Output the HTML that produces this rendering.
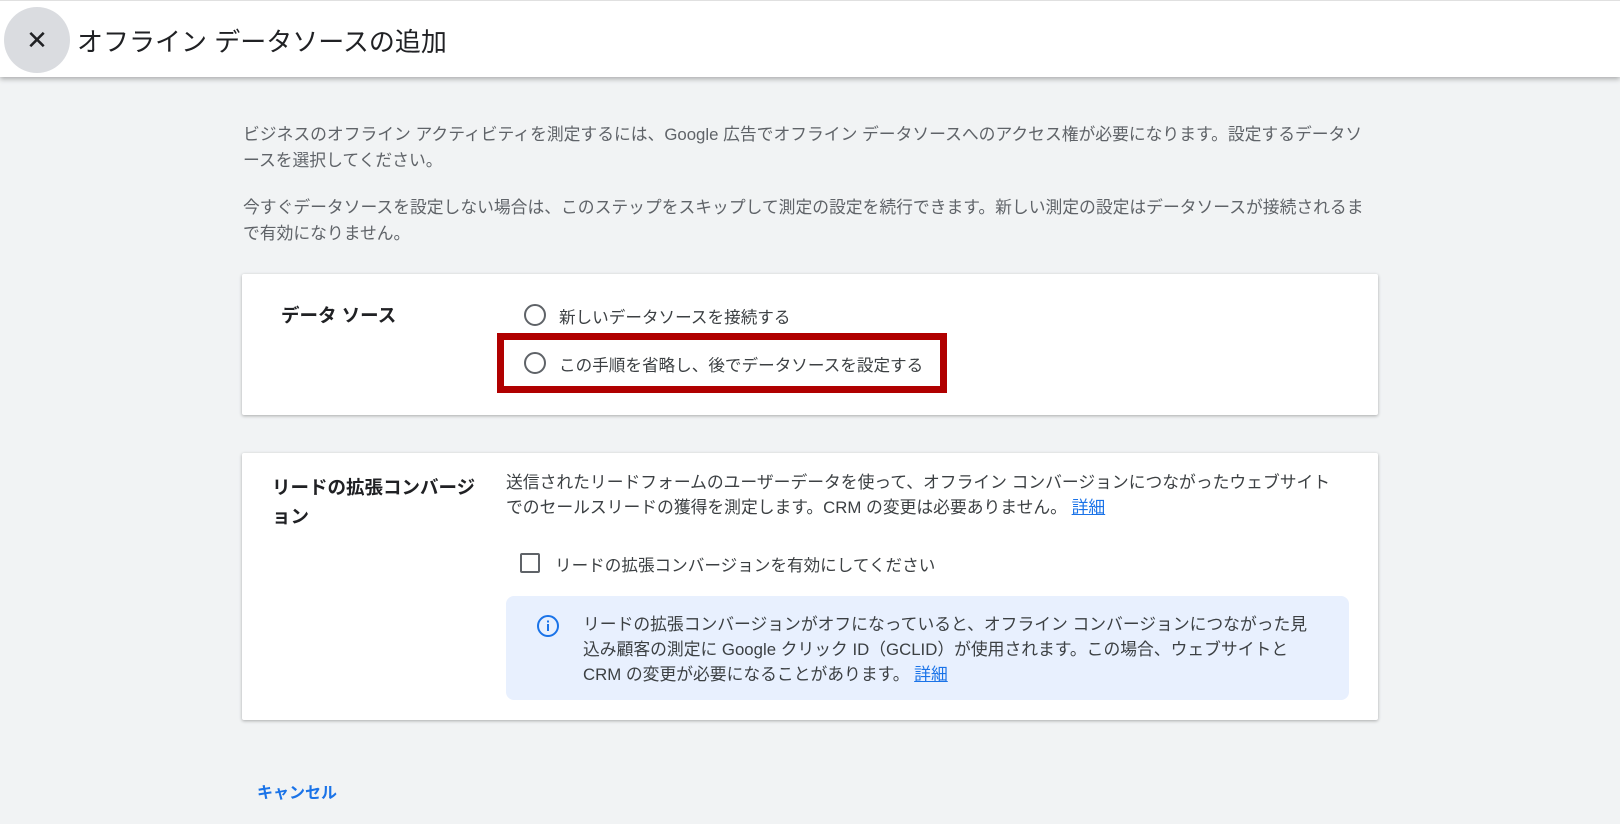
<!DOCTYPE html>
<html><head><meta charset="utf-8"><style>
*{margin:0;padding:0;box-sizing:border-box}
body{width:1620px;height:824px;background:#f1f3f4;font-family:"Liberation Sans","Noto Sans CJK JP",sans-serif;color:#3c4043;position:relative;overflow:hidden}
.hdr{position:absolute;left:0;top:0;width:1620px;height:77px;background:#fff;box-shadow:0 2px 5px rgba(0,0,0,.3);border-top:1px solid #e0e0e0}
.close{position:absolute;left:4px;top:6px;width:66px;height:66px;border-radius:50%;background:#dadce0;font-size:26px;line-height:66px;text-align:center;color:#202124}
.title{position:absolute;left:77px;top:21px;font-size:26px;color:#202124;white-space:nowrap}
.p{position:absolute;left:243px;font-size:16.8px;line-height:26px;color:#5f6368;white-space:nowrap}
.card{position:absolute;left:242px;width:1136px;background:#fff;box-shadow:0 1px 3px rgba(0,0,0,.3);border-radius:2px}
.lbl{position:absolute;font-size:18.5px;font-weight:bold;color:#202124;white-space:nowrap}
.radio{position:absolute;width:22px;height:22px;border:2px solid #5f6368;border-radius:50%}
.t{position:absolute;font-size:16.6px;color:#3c4043;white-space:nowrap}
a{color:#1a73e8;text-decoration:underline}
</style></head><body>
<div class="hdr"><div class="close">✕</div><div class="title">オフライン データソースの追加</div></div>
<div class="p" style="top:122px">ビジネスのオフライン アクティビティを測定するには、Google 広告でオフライン データソースへのアクセス権が必要になります。設定するデータソ<br>ースを選択してください。</div>
<div class="p" style="top:195px">今すぐデータソースを設定しない場合は、このステップをスキップして測定の設定を続行できます。新しい測定の設定はデータソースが接続されるま<br>で有効になりません。</div>
<div class="card" style="top:274px;height:141px">
 <div class="lbl" style="left:39px;top:28px">データ ソース</div>
 <div class="radio" style="left:282px;top:30px"></div>
 <div class="t" style="left:317px;top:30px">新しいデータソースを接続する</div>
 <div style="position:absolute;left:255px;top:59px;width:450px;height:60px;border:7px solid #b00000"></div>
 <div class="radio" style="left:282px;top:78px"></div>
 <div class="t" style="left:317px;top:78px">この手順を省略し、後でデータソースを設定する</div>
</div>
<div class="card" style="top:453px;height:267px">
 <div class="lbl" style="left:30px;top:20px;line-height:29px">リードの拡張コンバージ<br>ョン</div>
 <div class="t" style="left:264px;top:17px;line-height:25px;font-size:16.8px">送信されたリードフォームのユーザーデータを使って、オフライン コンバージョンにつながったウェブサイト<br>でのセールスリードの獲得を測定します。CRM の変更は必要ありません。 <a>詳細</a></div>
 <div style="position:absolute;left:278px;top:100px;width:20px;height:20px;border:2px solid #5f6368;border-radius:2px"></div>
 <div class="t" style="left:313px;top:99px">リードの拡張コンバージョンを有効にしてください</div>
 <div style="position:absolute;left:264px;top:143px;width:843px;height:104px;background:#e8f0fe;border-radius:8px">
  <svg style="position:absolute;left:30px;top:18px" width="24" height="24" viewBox="0 0 24 24"><circle cx="12" cy="12" r="10" fill="none" stroke="#1a73e8" stroke-width="2"/><rect x="11" y="10" width="2" height="7" fill="#1a73e8"/><rect x="11" y="6.5" width="2" height="2" fill="#1a73e8"/></svg>
  <div class="t" style="left:77px;top:16px;line-height:25px;font-size:16.8px">リードの拡張コンバージョンがオフになっていると、オフライン コンバージョンにつながった見<br>込み顧客の測定に Google クリック ID（GCLID）が使用されます。この場合、ウェブサイトと<br>CRM の変更が必要になることがあります。 <a>詳細</a></div>
 </div>
</div>
<div style="position:absolute;left:257px;top:779px;font-size:16px;font-weight:bold;color:#1a73e8">キャンセル</div>
</body></html>
